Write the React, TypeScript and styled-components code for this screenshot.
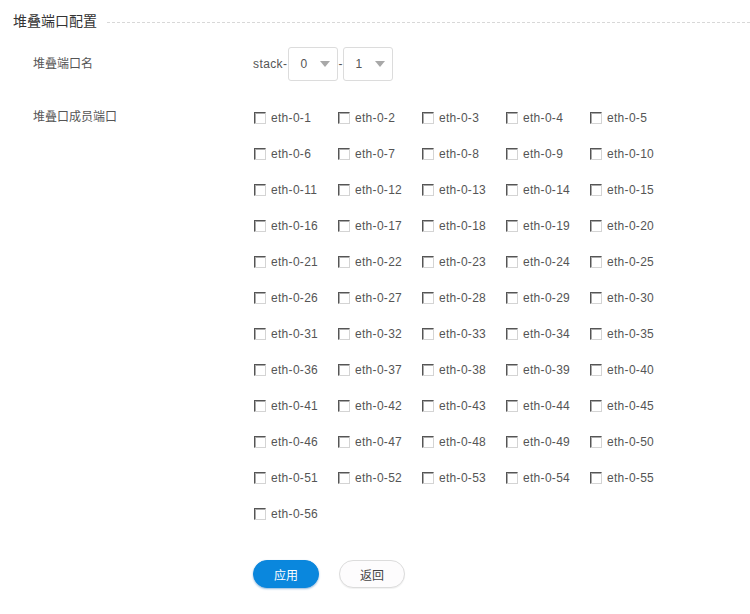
import React from "react"
import styled, { createGlobalStyle } from "styled-components"

const GlobalStyle = createGlobalStyle`
  html, body {
    margin: 0;
    padding: 0;
    background: #fff;
  }
  body {
    font-family: "Liberation Sans", "Noto Sans CJK SC", sans-serif;
    font-size: 12px;
    color: #555;
  }
`

const Page = styled.div`
  width: 750px;
  height: 614px;
  overflow: hidden;
`

const Legend = styled.div`
  display: flex;
  align-items: center;
  height: 40px;
  padding-left: 13px;
`

const LegendText = styled.span`
  font-size: 14px;
  color: #333;
  line-height: 18px;
  margin-top: 1px;
`

const DashLine = styled.div`
  flex: 1;
  margin-left: 10px;
  margin-top: 4px;
  border-top: 1px dashed #d8d8d8;
`

const Row = styled.div<{ $top: number }>`
  display: flex;
  align-items: ${p => (p.$top ? "flex-start" : "center")};
  margin-top: ${p => p.$top || 7}px;
  padding-left: 33px;
`

const Label = styled.div<{ $lh: number }>`
  width: 220px;
  line-height: ${p => p.$lh}px;
  color: #555;
`

const Control = styled.div`
  display: flex;
  align-items: center;
`

const Plain = styled.span<{ $spacing?: number }>`
  color: #555;
  letter-spacing: ${p => p.$spacing ?? 0}px;
`

const SelectBox = styled.div<{ $left: number }>`
  box-sizing: border-box;
  width: 50px;
  height: 34px;
  border: 1px solid #dcdcdc;
  border-radius: 3px;
  display: flex;
  align-items: center;
  padding-left: 11px;
  margin-left: ${p => p.$left}px;
  color: #555;
`

const Arrow = styled.span`
  width: 0;
  height: 0;
  margin-left: 13px;
  border-left: 5px solid transparent;
  border-right: 5px solid transparent;
  border-top: 6px solid #a8a8a8;
`

const Grid = styled.div`
  display: grid;
  grid-template-columns: repeat(5, 84px);
  grid-auto-rows: 36px;
`

const Item = styled.label`
  display: flex;
  align-items: center;
  color: #555;
  letter-spacing: 0.3px;
`

const Box = styled.span`
  box-sizing: border-box;
  width: 12px;
  height: 12px;
  margin: 0 5px 0 1px;
  border-top: 1px solid #555;
  border-left: 1px solid #555;
  border-right: 1px solid #d4d4d4;
  border-bottom: 1px solid #d4d4d4;
  background: #fff;
  box-shadow: inset 1px 1px 0 #aaa;
`

const Actions = styled.div`
  display: flex;
  gap: 20px;
  margin-top: 28px;
  padding-left: 253px;
`

const Button = styled.button<{ $primary?: boolean }>`
  box-sizing: border-box;
  width: 66px;
  height: 28px;
  border-radius: 14px;
  font-family: "Liberation Sans", "Noto Sans CJK SC", sans-serif;
  font-size: 12px;
  cursor: pointer;
  border: 1px solid ${p => (p.$primary ? "#0a86dc" : "#dcdcdc")};
  background: ${p => (p.$primary ? "#0a87dd" : "#fdfcfd")};
  color: ${p => (p.$primary ? "#fff" : "#444")};
  box-shadow: ${p => (p.$primary ? "0 1px 2px rgba(10,100,180,0.45)" : "0 1px 1px rgba(0,0,0,0.06)")};
`

const ports = Array.from({ length: 56 }, (_, i) => `eth-0-${i + 1}`)

export default function App() {
  return (
    <Page>
      <GlobalStyle />
      <Legend>
        <LegendText>堆叠端口配置</LegendText>
        <DashLine />
      </Legend>
      <Row $top={0}>
        <Label $lh={34}>堆叠端口名</Label>
        <Control>
          <Plain $spacing={0.4}>stack-</Plain>
          <SelectBox $left={1}>
            0<Arrow />
          </SelectBox>
          <Plain>-</Plain>
          <SelectBox $left={1}>
            1<Arrow />
          </SelectBox>
        </Control>
      </Row>
      <Row $top={19}>
        <Label $lh={34}>堆叠口成员端口</Label>
        <Grid>
          {ports.map(p => (
            <Item key={p}>
              <Box />
              {p}
            </Item>
          ))}
        </Grid>
      </Row>
      <Actions>
        <Button $primary>应用</Button>
        <Button>返回</Button>
      </Actions>
    </Page>
  )
}
